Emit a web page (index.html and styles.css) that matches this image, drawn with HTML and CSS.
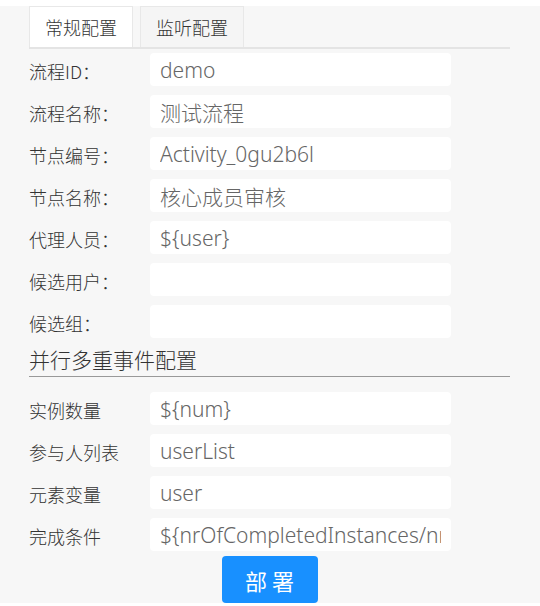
FILE: index.html
```html
<!DOCTYPE html>
<html lang="zh-CN">
<head>
<meta charset="utf-8">
<link rel="stylesheet" href="styles.css">
</head>
<body>
<div class="panel">
  <div class="tabs">
    <div class="tab tab-active">常规配置</div>
    <div class="tab">监听配置</div>
  </div>
  <div class="form">
    <div class="row"><label class="label">流程ID：</label><input class="field" value="demo" readonly></div>
    <div class="row"><label class="label">流程名称：</label><input class="field" value="测试流程" readonly></div>
    <div class="row"><label class="label">节点编号：</label><input class="field" value="Activity_0gu2b6l" readonly></div>
    <div class="row"><label class="label">节点名称：</label><input class="field" value="核心成员审核" readonly></div>
    <div class="row"><label class="label">代理人员：</label><input class="field" value="${user}" readonly></div>
    <div class="row"><label class="label">候选用户：</label><input class="field" value="" readonly></div>
    <div class="row"><label class="label">候选组：</label><input class="field" value="" readonly></div>
  </div>
  <div class="section-title">并行多重事件配置</div>
  <div class="form">
    <div class="row"><label class="label">实例数量</label><input class="field" value="${num}" readonly></div>
    <div class="row"><label class="label">参与人列表</label><input class="field" value="userList" readonly></div>
    <div class="row"><label class="label">元素变量</label><input class="field" value="user" readonly></div>
    <div class="row"><label class="label">完成条件</label><input class="field" value="${nrOfCompletedInstances/nrOfInstances}" readonly></div>
  </div>
  <div class="actions">
    <button class="btn">部 署</button>
  </div>
</div>
</body>
</html>
```

FILE: styles.css
```css
* { box-sizing: border-box; }
html, body { margin: 0; padding: 0; background: #fff; }
body {
  font-family: "Noto Sans", "Noto Sans CJK SC", sans-serif;
  color: #333;
}
.panel {
  margin-top: 6px;
  height: 597px;
  background: #f7f7f7;
  padding: 0 30px 0 29px;
}
.tabs {
  display: flex;
  gap: 7px;
  height: 43px;
  border-bottom: 2px solid #e4e4e4;
}
.tab {
  width: 104px;
  height: 41px;
  border: 1px solid #e8e8e8;
  border-bottom: none;
  background: #f5f5f5;
  display: flex;
  align-items: center;
  justify-content: center;
  font-family: "Noto Sans CJK SC", sans-serif;
  font-weight: 300;
  font-size: 18px;
  color: #333;
}
.tab-active { background: #fff; }
.form {
  display: flex;
  flex-direction: column;
  gap: 9px;
}
.tabs + .form { margin-top: 4px; }
.row {
  display: flex;
  align-items: center;
  height: 33px;
}
.label {
  width: 121px;
  flex: none;
  font-family: "Noto Sans CJK SC", sans-serif;
  font-weight: 300;
  font-size: 18px;
  color: #333;
  padding-top: 3px;
}
.field {
  width: 301px;
  height: 33px;
  border: none;
  outline: none;
  border-radius: 4px;
  background: #fff;
  padding: 0 10px;
  font-family: "Noto Sans", "Noto Sans CJK SC", sans-serif;
  font-weight: 300;
  font-size: 21px;
  color: #666;
}
.section-title {
  margin-top: 6px;
  line-height: 30px;
  padding-bottom: 2px;
  border-bottom: 1px solid #999;
  margin-bottom: 15px;
  font-family: "Noto Sans CJK SC", sans-serif;
  font-weight: 300;
  font-size: 21px;
  color: #333;
}
.actions {
  display: flex;
  justify-content: center;
  margin-top: 5px;
}
.btn {
  width: 96px;
  height: 47px;
  border: none;
  border-radius: 4px;
  background: #1890ff;
  color: #fff;
  font-family: "Noto Sans CJK SC", sans-serif;
  font-size: 22px;
  padding: 0;
}
```
